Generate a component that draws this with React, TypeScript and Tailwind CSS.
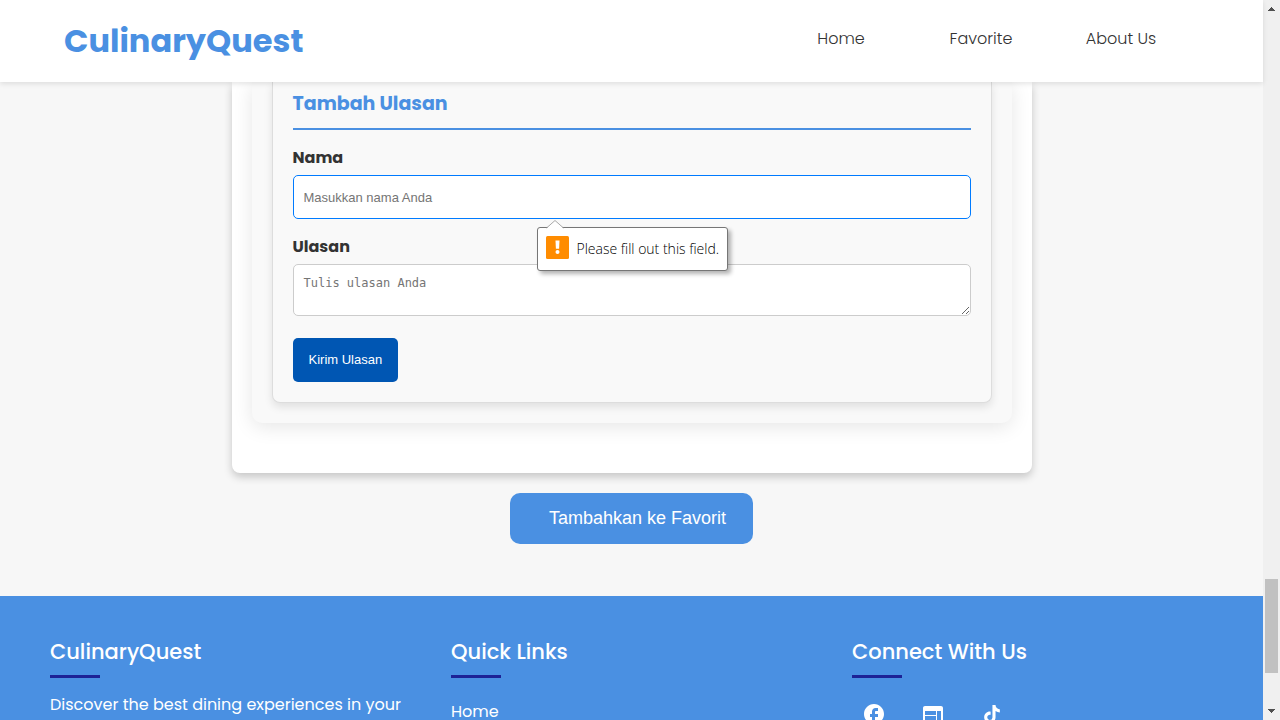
import type { ReactNode } from 'react';
import { MdFacebook, MdWeb } from 'react-icons/md';

const navItems = ['Home', 'Favorite', 'About Us'];

function Header() {
  return (
    <header className="relative z-10 flex h-[82px] shrink-0 items-center justify-between bg-white pr-[72px] pl-16 shadow-[0_2px_5px_rgba(0,0,0,0.1)]">
      <a href="#home" className="text-[32px] leading-10 font-bold text-[#4a90e2]">
        CulinaryQuest
      </a>
      <nav className="grid w-[420px] grid-cols-3 pb-1 text-center text-base text-[#333]">
        {navItems.map((item) => (
          <a key={item} href="#nav" className="font-light">
            {item}
          </a>
        ))}
      </nav>
    </header>
  );
}

function ValidationHint() {
  return (
    <div
      role="alert"
      className="absolute top-[52px] left-[244px] flex h-11 items-center rounded-[3px] border border-[#767676] bg-white px-2 shadow-[3px_3px_4px_rgba(0,0,0,0.3)]"
    >
      <svg className="absolute -top-2 left-2 h-[9px] w-[18px]" viewBox="0 0 18 9" aria-hidden="true">
        <path d="M0.5 8.5 L9 0.5 L17.5 8.5 V9 H0.5Z" fill="#fff" />
        <path d="M0.5 8 L9 0.5 L17.5 8" fill="none" stroke="#a9a9a9" />
      </svg>
      <svg className="mr-2 mb-1 h-[23px] w-[23px]" viewBox="0 0 23 23" aria-hidden="true">
        <rect width="23" height="23" rx="1.5" fill="#ff8c00" />
        <path d="M9.5 4.5h4l-.4 8.3h-3.2z" fill="#fff" />
        <circle cx="11.5" cy="16" r="2" fill="#fff" />
      </svg>
      <span className="font-['Segoe_UI','Open_Sans',sans-serif] text-sm font-light whitespace-nowrap text-black">
        Please fill out this field.
      </span>
    </div>
  );
}

function TikTokIcon() {
  return (
    <svg className="h-6 w-6" viewBox="0 0 24 24" fill="currentColor" aria-hidden="true">
      <path d="M16.6 5.82A4.278 4.278 0 0 1 15.54 3h-3.09v12.4a2.592 2.592 0 0 1-2.59 2.5c-1.42 0-2.6-1.16-2.6-2.6 0-1.72 1.66-3.01 3.37-2.48V9.66c-3.45-.46-6.47 2.22-6.47 5.64 0 3.33 2.76 5.7 5.69 5.7 3.14 0 5.69-2.55 5.69-5.7V9.01a7.35 7.35 0 0 0 4.3 1.38V7.3s-1.88.09-3.24-1.48z" />
    </svg>
  );
}

function ReviewForm() {
  return (
    <form
      noValidate
      onSubmit={(event) => event.preventDefault()}
      className="rounded-b-lg border border-t-0 border-[#ddd] bg-[#f9f9f9] px-5 pt-2 pb-5 shadow-[0_4px_8px_rgba(0,0,0,0.1)]"
    >
      <h3 className="border-b-2 border-[#4a90e2] pb-[10px] text-[19px] leading-7 font-bold text-[#4a90e2]">
        Tambah Ulasan
      </h3>
      <label htmlFor="nama" className="mt-4 block pb-1 text-base leading-6 font-bold text-[#333]">
        Nama
      </label>
      <div className="relative mt-px">
        <input
          id="nama"
          type="text"
          placeholder="Masukkan nama Anda"
          className="block h-11 w-full rounded-[5px] border border-[#007bff] bg-white px-[10px] font-['Liberation_Sans',sans-serif] text-[13px] outline-none placeholder:text-[#757575]"
        />
        <ValidationHint />
      </div>
      <label htmlFor="ulasan" className="mt-4 block pb-1 text-base leading-6 font-bold text-[#333]">
        Ulasan
      </label>
      <textarea
        id="ulasan"
        placeholder="Tulis ulasan Anda"
        className="mt-px block h-[52px] w-full resize rounded-[5px] border border-[#ccc] bg-white p-[10px] font-['DejaVu_Sans_Mono',monospace] text-xs outline-none placeholder:text-[#757575]"
      />
      <button
        type="submit"
        className="mt-[22px] block h-11 rounded-[5px] bg-[#0056b3] px-4 font-['Liberation_Sans',sans-serif] text-[13px] text-white"
      >
        Kirim Ulasan
      </button>
    </form>
  );
}

function FooterColumn({ title, children }: { title: string; children: ReactNode }) {
  return (
    <section>
      <h3 className="text-[21px] leading-8 font-medium">{title}</h3>
      <div className="mt-[7px] h-[3px] w-[50px] bg-[#1d2296]" />
      {children}
    </section>
  );
}

function Footer() {
  return (
    <footer className="grid flex-1 shrink-0 grid-cols-3 gap-10 bg-[#4a90e2] px-[50px] pt-10 text-base text-white">
      <FooterColumn title="CulinaryQuest">
        <p className="mt-[15px] leading-6">Discover the best dining experiences in your</p>
      </FooterColumn>
      <FooterColumn title="Quick Links">
        <a href="#home" className="mt-[22px] block leading-6">
          Home
        </a>
      </FooterColumn>
      <FooterColumn title="Connect With Us">
        <div className="mt-6 ml-[10px] flex gap-[35px] text-2xl">
          <a href="#facebook" aria-label="Facebook">
            <MdFacebook />
          </a>
          <a href="#web" aria-label="Website">
            <MdWeb />
          </a>
          <a href="#tiktok" aria-label="TikTok">
            <TikTokIcon />
          </a>
        </div>
      </FooterColumn>
    </footer>
  );
}

function Scrollbar() {
  return (
    <div aria-hidden="true" className="flex w-[17px] shrink-0 flex-col items-center bg-[#f0f0f0]">
      <svg className="h-[17px] w-[17px] shrink-0" viewBox="0 0 17 17" shapeRendering="crispEdges">
        <path d="M5 11h7v-1h-1v-1h-1v-1h-1v-1h-1v1h-1v1h-1v1h-1z" fill="#505050" />
      </svg>
      <div className="grow-[562]" />
      <div className="h-[94px] w-[13px] bg-[#c1c1c1]" />
      <div className="grow-[30]" />
      <svg className="h-[17px] w-[17px] shrink-0" viewBox="0 0 17 17" shapeRendering="crispEdges">
        <path d="M5 6h7v1h-1v1h-1v1h-1v1h-1v-1h-1v-1h-1v-1h-1z" fill="#505050" />
      </svg>
    </div>
  );
}

export default function App() {
  return (
    <div className="flex h-screen overflow-hidden bg-[#f7f7f7] font-['Poppins','Inter',sans-serif]">
      <div className="flex min-w-0 flex-1 flex-col">
        <Header />
        <main className="flex shrink-0 flex-col items-center pb-[52px]">
          <article className="w-full max-w-[800px] rounded-b-lg bg-white px-5 pb-[50px] shadow-[0_4px_8px_rgba(0,0,0,0.2)]">
            <section className="rounded-b-[10px] bg-[#f9f9f9] px-5 pb-5 shadow-[0_4px_20px_rgba(0,0,0,0.1)]">
              <ReviewForm />
            </section>
          </article>
          <button
            type="button"
            className="mt-5 h-[51px] rounded-[10px] bg-[#4a90e2] pr-[27px] pb-[2px] pl-[39px] font-['Liberation_Sans',sans-serif] text-lg text-white"
          >
            Tambahkan ke Favorit
          </button>
        </main>
        <Footer />
      </div>
      <Scrollbar />
    </div>
  );
}
